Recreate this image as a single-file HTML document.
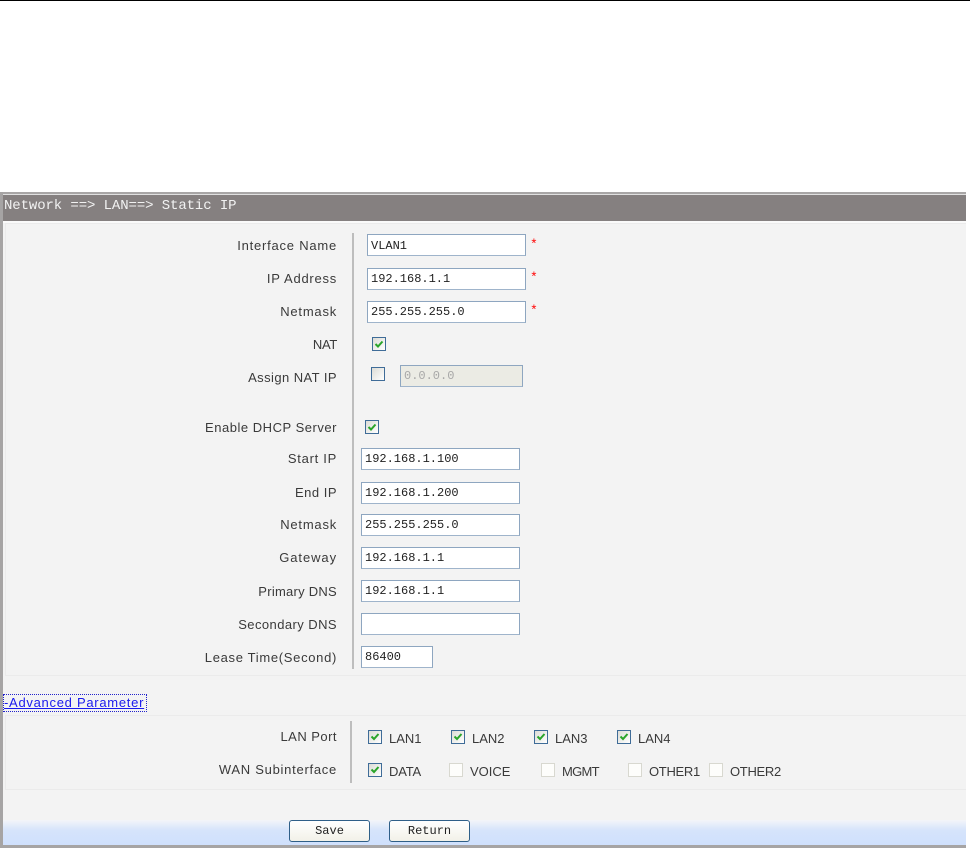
<!DOCTYPE html>
<html><head><meta charset="utf-8"><style>
html,body{margin:0;padding:0;width:970px;height:848px;overflow:hidden;background:#fff}
#w{position:relative;width:970px;height:848px;overflow:hidden}
#w div,#w span,#w a{position:absolute;white-space:nowrap;box-sizing:border-box}
.l{right:633px;font:13px/16px "Liberation Sans",sans-serif;letter-spacing:.35px;color:#3a3a3a;text-align:right}
.i{height:22px;background:#fff;border:1px solid #8ea6c0;border-bottom-color:#9fb4cb;font:12px/20px "Liberation Mono",monospace;color:#222;padding-left:5px}
.c{width:14px;height:14px;background:linear-gradient(135deg,#dcdcd6,#fff);border:1px solid #3f6c98}
.c.e{border-color:#d8d8d0;background:#fdfdfb}
.c svg{position:absolute;left:0;top:0}
.t{font:13px/16px "Liberation Sans",sans-serif;color:#3a3a3a}
.s{color:#f00;font:13px/14px "Liberation Mono",monospace}
.b{height:22px;width:81px;top:820px;border:1px solid #2f5f88;border-radius:3px;background:linear-gradient(#fff,#f2f1e8);font:12px/20px "Liberation Mono",monospace;color:#222;text-align:center}
</style></head><body><div id="w">
<div style="left:0;top:0;width:970px;height:1px;background:#000"></div>
<div style="left:0;top:192px;width:966px;height:656px;background:#f3f3f3"></div>
<div style="left:0;top:192px;width:966px;height:2px;background:#a8a6a6"></div>
<div style="left:0;top:194px;width:966px;height:1px;background:#e0e0e0"></div>
<div style="left:0;top:192px;width:2.5px;height:656px;background:#a6a4a4"></div>
<div style="left:3px;top:195px;width:963px;height:26px;background:#858080;color:#f2f2f2;font:14px/22px 'Liberation Mono',monospace;letter-spacing:-.1px;padding-left:1px;padding-top:0">Network ==&gt; LAN==&gt; Static IP</div>
<div style="left:3px;top:221px;width:963px;height:2px;background:#fafafa"></div>
<div style="left:5px;top:223px;width:961px;height:453px;border:1px solid #ebebeb;border-right:0"></div>
<div style="left:5px;top:715px;width:961px;height:75px;border:1px solid #ebebeb;border-right:0"></div>
<div style="left:352px;top:233px;width:2px;height:436px;background:#bdbdbd"></div>
<div style="left:350px;top:721px;width:2px;height:62px;background:#bdbdbd"></div>

<div class="l" style="top:238px;letter-spacing:.78px">Interface Name</div>
<div class="l" style="top:271px;letter-spacing:.75px">IP Address</div>
<div class="l" style="top:304px;letter-spacing:.78px">Netmask</div>
<div class="l" style="top:337px;letter-spacing:-.3px">NAT</div>
<div class="l" style="top:370px;letter-spacing:.43px">Assign NAT IP</div>
<div class="l" style="top:420px;letter-spacing:.52px">Enable DHCP Server</div>
<div class="l" style="top:451px;letter-spacing:.72px">Start IP</div>
<div class="l" style="top:485px;letter-spacing:.5px">End IP</div>
<div class="l" style="top:517px;letter-spacing:.78px">Netmask</div>
<div class="l" style="top:550px;letter-spacing:.92px">Gateway</div>
<div class="l" style="top:584px;letter-spacing:.26px">Primary DNS</div>
<div class="l" style="top:617px;letter-spacing:.43px">Secondary DNS</div>
<div class="l" style="top:650px;letter-spacing:.68px">Lease Time(Second)</div>

<div class="i" style="left:367px;top:234px;width:159px;padding-left:3px;padding-top:1px">VLAN1</div>
<div class="i" style="left:367px;top:268px;width:159px;padding-left:3px">192.168.1.1</div>
<div class="i" style="left:367px;top:301px;width:159px;padding-left:3px">255.255.255.0</div>
<span class="s" style="left:530px;top:238px">*</span>
<span class="s" style="left:530px;top:271px">*</span>
<span class="s" style="left:530px;top:304px">*</span>

<div class="c" style="left:372px;top:337px"><svg width="12" height="12"><path d="M2.5 6 L5 8.5 L9.5 3.5" fill="none" stroke="#2aa52a" stroke-width="2"/></svg></div>
<div class="c" style="left:371px;top:367px"></div>
<div class="i" style="left:400px;top:365px;width:123px;background:#ebebe4;color:#a8a8a8;padding-left:3px">0.0.0.0</div>
<div class="c" style="left:365px;top:420px"><svg width="12" height="12"><path d="M2.5 6 L5 8.5 L9.5 3.5" fill="none" stroke="#2aa52a" stroke-width="2"/></svg></div>

<div class="i" style="left:361px;top:448px;width:159px;padding-left:3px">192.168.1.100</div>
<div class="i" style="left:361px;top:482px;width:159px;padding-left:3px">192.168.1.200</div>
<div class="i" style="left:361px;top:514px;width:159px;padding-left:3px">255.255.255.0</div>
<div class="i" style="left:361px;top:547px;width:159px;padding-left:3px">192.168.1.1</div>
<div class="i" style="left:361px;top:580px;width:159px;padding-left:3px">192.168.1.1</div>
<div class="i" style="left:361px;top:613px;width:159px"></div>
<div class="i" style="left:361px;top:646px;width:72px;padding-left:3px">86400</div>

<a style="left:3px;top:694px;height:18px;width:144px;border:1px dotted #2222cc;padding-left:0;font:13px/16px 'Liberation Sans',sans-serif;letter-spacing:.72px;color:#1a1aee;text-decoration:underline">-Advanced Parameter</a>

<div class="l" style="top:729px;letter-spacing:.47px">LAN Port</div>
<div class="l" style="top:762px;letter-spacing:.73px">WAN Subinterface</div>

<div class="c" style="left:368px;top:730px"><svg width="12" height="12"><path d="M2.5 5.5 L5 8 L9.5 3" fill="none" stroke="#2aa52a" stroke-width="2"/></svg></div>
<span class="t" style="left:389px;top:731px">LAN1</span>
<div class="c" style="left:451px;top:730px"><svg width="12" height="12"><path d="M2.5 5.5 L5 8 L9.5 3" fill="none" stroke="#2aa52a" stroke-width="2"/></svg></div>
<span class="t" style="left:472px;top:731px">LAN2</span>
<div class="c" style="left:534px;top:730px"><svg width="12" height="12"><path d="M2.5 5.5 L5 8 L9.5 3" fill="none" stroke="#2aa52a" stroke-width="2"/></svg></div>
<span class="t" style="left:555px;top:731px">LAN3</span>
<div class="c" style="left:617px;top:730px"><svg width="12" height="12"><path d="M2.5 5.5 L5 8 L9.5 3" fill="none" stroke="#2aa52a" stroke-width="2"/></svg></div>
<span class="t" style="left:638px;top:731px">LAN4</span>

<div class="c" style="left:368px;top:763px"><svg width="12" height="12"><path d="M2.5 5.5 L5 8 L9.5 3" fill="none" stroke="#2aa52a" stroke-width="2"/></svg></div>
<span class="t" style="left:389px;top:764px;letter-spacing:-.2px">DATA</span>
<div class="c e" style="left:449px;top:763px"></div>
<span class="t" style="left:470px;top:764px">VOICE</span>
<div class="c e" style="left:541px;top:763px"></div>
<span class="t" style="left:562px;top:764px;letter-spacing:-.7px">MGMT</span>
<div class="c e" style="left:628px;top:763px"></div>
<span class="t" style="left:649px;top:764px;letter-spacing:-.3px">OTHER1</span>
<div class="c e" style="left:709px;top:763px"></div>
<span class="t" style="left:730px;top:764px;letter-spacing:-.3px">OTHER2</span>

<div style="left:3px;top:820px;width:963px;height:25px;background:linear-gradient(#f3f5f9,#d6e4fb 40%,#cfe0fc)"></div>
<div style="left:0;top:845px;width:966px;height:3px;background:#a6a4a4"></div>
<div class="b" style="left:289px">Save</div>
<div class="b" style="left:389px">Return</div>
</div></body></html>
